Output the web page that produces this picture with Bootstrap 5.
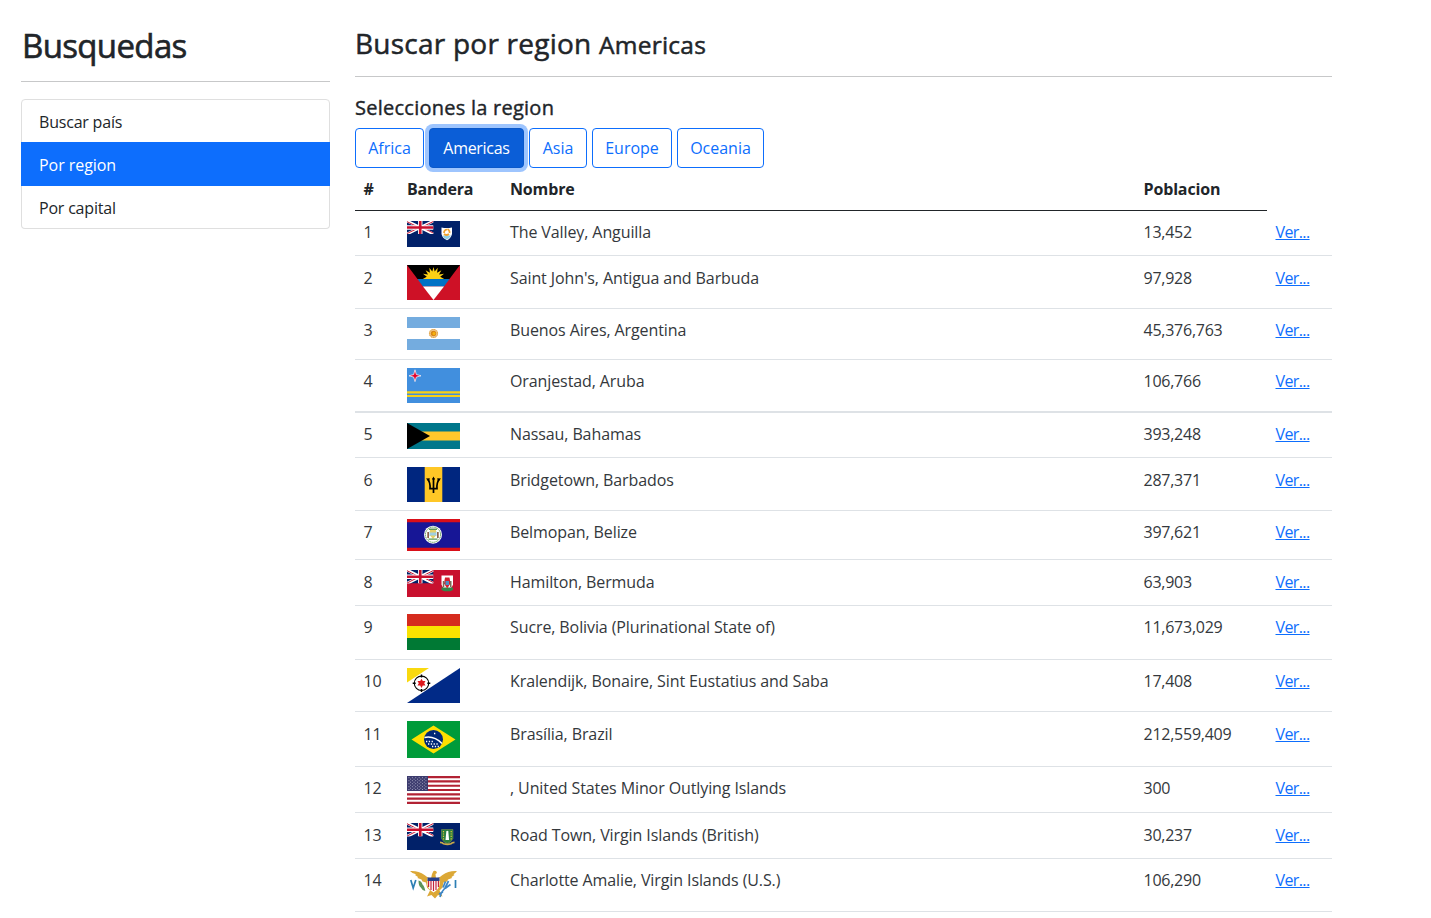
<!DOCTYPE html>
<html lang="es">
<head>
<meta charset="utf-8">
<meta name="viewport" content="width=device-width, initial-scale=1">
<title>Busquedas</title>
<link href="https://cdn.jsdelivr.net/npm/bootstrap@5.3.0/dist/css/bootstrap.min.css" rel="stylesheet">
<style>
  body { font-family: "Open Sans", "Noto Sans", sans-serif; font-size: 16px; line-height: 26px; letter-spacing: -.25px; color: #212529; overflow: hidden; }
  h1, h2, h3, h4 { font-weight: 500; margin: 0; white-space: nowrap; -webkit-text-stroke: .4px currentColor; }
  hr { margin: 0; border-top: 1px solid #212529; opacity: .25; }
  .page { padding-left: 21px; gap: 25px; }
  .sidebar { width: 309px; padding-top: 25px; }
  .sidebar h1 { font-size: 33px; line-height: 42px; letter-spacing: -.65px; padding-left: 1px; -webkit-text-stroke-width: .6px; }
  .sidebar hr { margin: 14px 0 17px; }
  .list-group { --bs-list-group-border-radius: 4px; --bs-list-group-border-color: #dfdfdf; --bs-list-group-color: #212529; }
  .list-group-item { padding: 8.5px 17px 7.5px; letter-spacing: -.2px; }
  .list-group-item.active { letter-spacing: -.05px; }
  .main-col { width: 977px; padding-top: 25px; }
  .main-col h2 { font-size: 28px; line-height: 36px; letter-spacing: .24px; -webkit-text-stroke-width: .5px; }
  .main-col h2 .term { font-size: 24.5px; }
  .main-col hr { margin: 13px 0 18px; }
  .main-col h4 { font-size: 20px; line-height: 26px; margin-bottom: 7px; letter-spacing: .25px; }
  .regions { gap: 5px; height: 40px; }
  .regions .btn { --bs-btn-padding-x: 0; --bs-btn-padding-y: 0; --bs-btn-font-size: 16px; --bs-btn-line-height: 38px; --bs-btn-border-radius: 4px; height: 40px; }
  .regions .picked { background: #0b5ed7; border-color: #0a58ca; color: #fff; box-shadow: 0 0 0 4px #9ec5fe; z-index: 1; letter-spacing: -.3px; }
  .w-africa { width: 69px; } .w-americas { width: 95px; } .w-asia { width: 58px; } .w-europe { width: 80px; } .w-oceania { width: 87px; }
  .countries { width: 977px; table-layout: fixed; border-collapse: separate; border-spacing: 0; margin: 0; }
  .countries > :not(caption) > * > * { padding: 8px 0 0 8.5px; border-bottom: 1px solid #dee2e6; white-space: nowrap; vertical-align: top; }
  .countries > thead > tr > th { border-bottom-color: #212529; height: 43px; font-weight: 700; letter-spacing: -.15px; }
  .countries > tbody > tr > td { color: #34383c; }
  .countries > tbody > tr > td.name { letter-spacing: -.1px; }
  .countries > tbody > tr > td.more { letter-spacing: -.6px; }
  .countries > tbody > tr > td.flagcell { line-height: 0; }
  .countries > tbody > tr.group-end > td { border-bottom-width: 2px; }
  .countries svg { width: 53px; display: block; }
</style>
</head>
<body class="bg-white">

<svg width="0" height="0" class="position-absolute" aria-hidden="true">
  <symbol id="jack" viewBox="0 0 60 30" preserveAspectRatio="none">
    <path fill="#012169" d="M0 0h60v30H0z"/>
    <path stroke="#fff" stroke-width="6.5" d="M0 0l60 30M60 0L0 30"/>
    <path stroke="#c8102e" stroke-width="2.2" d="M0 1.5l28 14M32 14l28 14M60 1L32 15M28 15L0 29"/>
    <path stroke="#fff" stroke-width="10" d="M30 0v30M0 15h60"/>
    <path stroke="#c8102e" stroke-width="6" d="M30 0v30M0 15h60"/>
  </symbol>
  <symbol id="ai" viewBox="0 0 53 26">
    <path fill="#012169" d="M0 0h53v26H0z"/><use href="#jack" width="26.5" height="13"/>
    <path fill="#fff" d="M34.500 6.500q5 1 10.500 0v6.500q-1 4.500-5 6.200q-4.700-2-5.500-6.200z"/>
    <path fill="#8fd0e6" d="M35.500 14.500h8.500q-1.500 3-4.200 4q-3-1-4.300-4z"/>
    <path fill="none" stroke="#f0a32f" stroke-width="1.700" d="M37 12q0-3.300 3-3.500M40.500 8q2.500 1.500 2 4M42 13q-2.500 2-5 0"/>
  </symbol>
  <symbol id="ag" viewBox="0 0 53 35">
    <path fill="#ce1126" d="M0 0h53v35H0z"/><path d="M0 0h53L46 9.200 42.500 14h-32z"/>
    <path fill="#fcd116" d="M26.500 2l1.200 4.600 3-3.800-.6 4.900 4.300-2.500-2.400 4.300 5-.7-3.800 2.900 4 2.300H15.800l4-2.300L16 8.800l5 .7-2.400-4.300 4.300 2.500-.6-4.900 3 3.800z"/>
    <path fill="#0072c6" d="M10.500 14h32L37 21.500H16z"/><path fill="#fff" d="M16 21.500h21L26.500 35z"/>
  </symbol>
  <symbol id="ar" viewBox="0 0 53 33">
    <path fill="#fff" d="M0 0h53v33H0z"/><path fill="#74acdf" d="M0 0h53v11H0zM0 22h53v11H0z"/>
    <circle cx="26.500" cy="16.500" r="4.600" fill="#f3ce9a"/><circle cx="26.500" cy="16.500" r="4" fill="none" stroke="#dc982f" stroke-width="1" stroke-dasharray="1.200 .7"/><circle cx="26.500" cy="16.500" r="2.800" fill="#d98716"/><circle cx="27" cy="16.500" r="1.500" fill="#f6b40e"/>
  </symbol>
  <symbol id="aw" viewBox="0 0 53 35">
    <path fill="#418fde" d="M0 0h53v35H0z"/><path fill="#f7d117" d="M0 23.200h53v2.200H0zM0 27h53v2H0z"/>
    <path fill="#e4002b" stroke="#fff" stroke-width=".7" d="M8 1.800l1.300 4.700L14 7.800 9.300 9.100 8 13.600 6.700 9.100 2 7.800l4.700-1.300z"/>
  </symbol>
  <symbol id="bs" viewBox="0 0 53 26">
    <path fill="#00778b" d="M0 0h53v26H0z"/><path fill="#ffc72c" d="M0 8.500h53v9H0z"/><path d="M0 0l23 13L0 26z"/>
  </symbol>
  <symbol id="bb" viewBox="0 0 53 35">
    <path fill="#00267f" d="M0 0h53v35H0z"/><path fill="#ffc726" d="M17.700 0h17.600v35H17.700z"/>
    <path fill="none" stroke="#000" stroke-width="1.700" d="M26.500 11v15M20.800 12.500q2.700 3 2.200 9.200h7q-.5-6.200 2.200-9.200"/>
    <path d="M26.500 9.500l1.600 3h-3.200zM19 11.500l3.800-.2-.8 3.700zM34 11.500l-3.800-.2.800 3.700z"/>
  </symbol>
  <symbol id="bz" viewBox="0 0 53 32">
    <path fill="#171696" d="M0 0h53v32H0z"/><path fill="#d90f19" d="M0 0h53v3.200H0zM0 28.800h53V32H0z"/>
    <circle cx="26" cy="15.700" r="9" fill="#fff"/><circle cx="26" cy="15.700" r="7.600" fill="none" stroke="#5c9b53" stroke-width="1" stroke-dasharray="1.400 .6"/>
    <path fill="#9fcfe0" d="M22.500 12h7v5h-7z"/><path fill="#e6d068" d="M23 11h6v2.500h-6zM23 16.500h6L26 20z"/><path fill="#8a6248" d="M20.300 13h1.700v6h-1.700zM30 13h1.700v6H30z"/><path fill="#5a9856" d="M22 9.500h8V11h-8zM21.500 19.500h9v1.300h-9z"/>
  </symbol>
  <symbol id="bm" viewBox="0 0 53 27">
    <path fill="#c8102e" d="M0 0h53v27H0z"/><use href="#jack" width="26.500" height="13.500"/>
    <path fill="#fff" d="M34.500 5.500h11.500v9q-1 3.500-5.700 5.500q-4.800-2-5.800-5.500z"/>
    <path fill="#31864a" d="M34.500 17.500h11.500v2.500l-3 1.300h-5.500l-3-1.300z"/><path fill="#d4212d" d="M38 7.500h4.500l1 6-3.300 5-3.200-5z"/><path fill="#4d8fc2" d="M38.500 11h3.500v4h-3.500z"/><path fill="#7d6a55" d="M35.800 11h1.500v6h-1.500zM43 11h1.500v6H43z"/>
  </symbol>
  <symbol id="bo" viewBox="0 0 53 36">
    <path fill="#d52b1e" d="M0 0h53v12H0z"/><path fill="#f9e300" d="M0 12h53v12H0z"/><path fill="#007934" d="M0 24h53v12H0z"/>
  </symbol>
  <symbol id="bq" viewBox="0 0 53 35">
    <path fill="#fff" d="M0 0h53v35H0z"/><path fill="#012a87" d="M53 0v35H0z"/><path fill="#f9d90f" d="M0 0h22L0 14.500z"/>
    <circle cx="14.500" cy="15.300" r="7.200" fill="none" stroke="#000" stroke-width="1.100"/><path stroke="#000" stroke-width="1.500" d="M14.500 6.500v3M14.500 21v3M5.700 15.300h3M20.300 15.300h3"/>
    <path fill="#dc171d" d="M14.500 10.700l1.300 2.300h2.700l-1.300 2.300 1.300 2.300h-2.700l-1.300 2.300-1.300-2.300h-2.700l1.300-2.300-1.300-2.300h2.700z"/>
  </symbol>
  <symbol id="br" viewBox="0 0 53 37">
    <path fill="#009b3a" d="M0 0h53v37H0z"/><path fill="#fedf00" d="M4.500 18.500l22-14 22 14-22 14z"/><circle cx="26.500" cy="18.500" r="9.500" fill="#002776"/>
    <path fill="none" stroke="#fff" stroke-width="1.500" d="M17.500 16.500q9.500-2 17.500 6"/>
    <path stroke="#fff" stroke-width="1.300" stroke-dasharray="1.300 1.500" d="M19 20.500h8M21 23h10M25 25.500h7M27 12.500h2"/>
  </symbol>
  <symbol id="um" viewBox="0 0 53 28">
    <path fill="#fff" d="M0 0h53v28H0z"/>
    <path stroke="#b22234" stroke-width="2.150" d="M0 1.080h53M0 5.390h53M0 9.700h53M0 14h53M0 18.300h53M0 22.600h53M0 26.920h53"/>
    <path fill="#3c3b6e" d="M0 0h21v15H0z"/>
    <path stroke="#b9b9cf" stroke-width=".9" stroke-dasharray=".9 2.500" d="M1.500 1.700h19M1.500 4.700h19M1.500 7.700h19M1.500 10.700h19M1.500 13.500h19M3.200 3.200h17M3.200 6.200h17M3.200 9.200h17M3.200 12.200h17"/>
  </symbol>
  <symbol id="vg" viewBox="0 0 53 27">
    <path fill="#012169" d="M0 0h53v27H0z"/><use href="#jack" width="26.500" height="13.500"/>
    <path fill="#2a7d3f" stroke="#8f9a4a" stroke-width=".5" d="M34.500 6.500h11.500v9q-1.500 3.500-5.700 5.200q-4.300-1.700-5.800-5.200z"/>
    <path fill="#fff" d="M39.300 8.500q1-1.500 2 0l.8 8.500h-3.600z"/><path stroke="#e5c63b" stroke-width="1.200" stroke-dasharray="1.200 1.200" d="M36.500 8v9M44.200 8v9"/>
    <path fill="none" stroke="#c9aa4a" stroke-width="1.700" d="M33 19.300q2.500 0 3.500 1.500 4 1 7.500 0 1-1.500 3.500-1.500"/>
  </symbol>
  <symbol id="vi" viewBox="0 0 53 35">
    <path fill="#fff" d="M0 0h53v35H0z"/>
    <path fill="#dca836" d="M26.500 3q3-1 3.500 2l-1.500 1 .5 4.500q3.500-.5 6.500-3.500 6-4.500 14.500-4-2 2.500-3.500 3.200l1 .8-3 2 .5 1-4 1.500-1 2-3.500 1-1 5-3 3 3 6-4.500-1.500-3 3.500-3.500-3.500-4.500 1.500 3-6-3-3-1-5-3.500-1-1-2-4-1.500.5-1-3-2 1-.8Q5 5.500 3 3q8.500-.5 14.500 4 3 3 6.500 3.500L25 6z"/>
    <path fill="#fff" d="M20.500 10h12v7q-1 5-6 7.500-5-2.500-6-7.500z"/><path stroke="#c4243d" stroke-width="1.200" d="M21.600 13v6M24 13v9M26.500 13v10M29 13v9M31.400 13v6"/><path fill="#263f8c" d="M20.500 9.500h12V13h-12z"/>
    <path fill="#5c9459" d="M11.500 12.500q3 .5 4 4 2 1.500 2.800 6.500-3.500-1-4.500-3.500-2.300-1.500-2.300-7z"/>
    <path fill="none" stroke="#3d86c6" stroke-width="1.700" d="M33 29q1-5 5-9M36 19.500l2.500-6M38 20l3.500-7M38 20.500l5.500-4M32 26l4-2"/>
    <path fill="none" stroke="#2d7fb4" stroke-width="1.700" d="M3.800 12l2.400 8L8.800 12"/><path fill="none" stroke="#2d7fb4" stroke-width="1.700" d="M48.500 12v8"/>
  </symbol>
</svg>

<div class="page d-flex">
  <aside class="sidebar flex-shrink-0">
    <h1>Busquedas</h1>
    <hr>
    <div class="list-group">
      <a href="#" class="list-group-item list-group-item-action">Buscar país</a>
      <a href="#" class="list-group-item list-group-item-action active">Por region</a>
      <a href="#" class="list-group-item list-group-item-action">Por capital</a>
    </div>
  </aside>

  <main class="main-col flex-shrink-0">
    <h2>Buscar por region <span class="term">Americas</span></h2>
    <hr>
    <h4>Selecciones la region</h4>
    <div class="regions d-flex">
      <button type="button" class="btn btn-outline-primary w-africa">Africa</button>
      <button type="button" class="btn btn-outline-primary picked w-americas">Americas</button>
      <button type="button" class="btn btn-outline-primary w-asia">Asia</button>
      <button type="button" class="btn btn-outline-primary w-europe">Europe</button>
      <button type="button" class="btn btn-outline-primary w-oceania">Oceania</button>
    </div>
    <table class="table countries">
      <colgroup><col style="width:43.5px"><col style="width:103px"><col style="width:633.5px"><col style="width:132px"><col style="width:65px"></colgroup>
      <thead><tr><th>#</th><th>Bandera</th><th>Nombre</th><th>Poblacion</th></tr></thead>
      <tbody id="rows"></tbody>
    </table>
  </main>
</div>

<script src="https://cdn.jsdelivr.net/npm/bootstrap@5.3.0/dist/js/bootstrap.bundle.min.js"></script>
<script>
  // flag id, name, population, row height, space above the flag, flag height, space above the text
  const countries = [
    ['ai', 'The Valley, Anguilla', 13452, 45, 10, 26, 8],
    ['ag', "Saint John's, Antigua and Barbuda", 97928, 53, 9, 35, 9],
    ['ar', 'Buenos Aires, Argentina', 45376763, 51, 8, 33, 8],
    ['aw', 'Oranjestad, Aruba', 106766, 53, 8, 35, 8],
    ['bs', 'Nassau, Bahamas', 393248, 45, 10, 26, 8],
    ['bb', 'Bridgetown, Barbados', 287371, 53, 9, 35, 9],
    ['bz', 'Belmopan, Belize', 397621, 49, 8, 32, 8],
    ['bm', 'Hamilton, Bermuda', 63903, 46, 10, 27, 9],
    ['bo', 'Sucre, Bolivia (Plurinational State of)', 11673029, 54, 8, 36, 8],
    ['bq', 'Kralendijk, Bonaire, Sint Eustatius and Saba', 17408, 52, 8, 35, 8],
    ['br', 'Brasília, Brazil', 212559409, 55, 9, 37, 9],
    ['um', ', United States Minor Outlying Islands', 300, 46, 9, 28, 8],
    ['vg', 'Road Town, Virgin Islands (British)', 30237, 46, 10, 27, 9],
    ['vi', 'Charlotte Amalie, Virgin Islands (U.S.)', 106290, 53, 9, 35, 8]
  ];
  document.getElementById('rows').innerHTML = countries.map(([id, name, pop, h, top, fh, pad], i) => `
    <tr class="${id === 'aw' ? 'group-end' : ''}" style="height:${h}px">
      <td style="padding-top:${pad}px">${i + 1}</td>
      <td class="flagcell" style="padding-top:${top}px"><svg style="height:${fh}px"><use href="#${id}"/></svg></td>
      <td class="name" style="padding-top:${pad}px">${name}</td>
      <td style="padding-top:${pad}px">${pop.toLocaleString('en-US')}</td>
      <td class="more" style="padding-top:${pad}px"><a href="#">Ver...</a></td>
    </tr>`).join('');
</script>
</body>
</html>
